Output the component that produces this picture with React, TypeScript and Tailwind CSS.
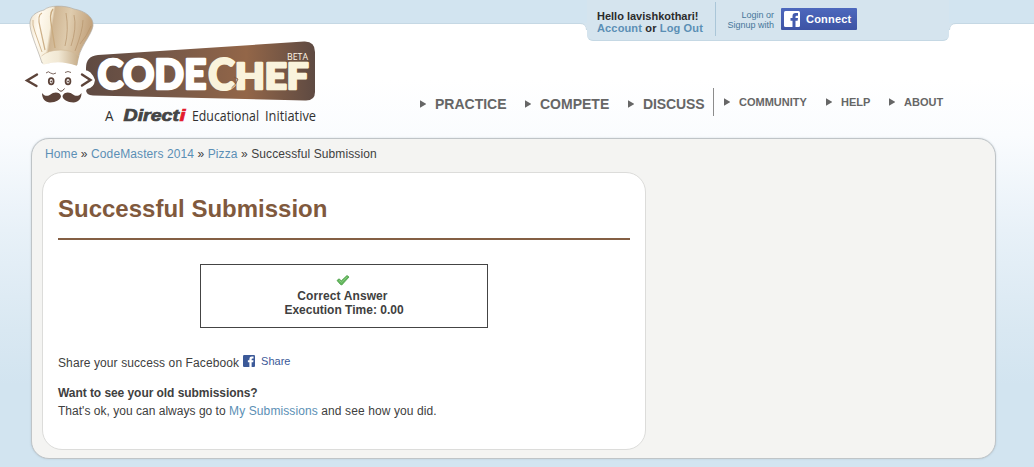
import React from "react";

function Logo() {
  return (
    <svg className="block h-[138px] w-[330px] shrink-0" viewBox="0 0 330 138" role="img" aria-label="CodeChef">
      <defs>
        <linearGradient id="plate" x1="0" x2="1" y1="0" y2="0">
          <stop offset="0" stopColor="#5f4a42" />
          <stop offset="0.4" stopColor="#7a5a48" />
          <stop offset="0.7" stopColor="#936648" />
          <stop offset="1" stopColor="#5e4a42" />
        </linearGradient>
        <linearGradient id="hat" x1="0" x2="1" y1="0" y2="0.15">
          <stop offset="0" stopColor="#eee0c8" />
          <stop offset="0.18" stopColor="#fffaf0" />
          <stop offset="0.36" stopColor="#f7efdc" />
          <stop offset="0.4" stopColor="#cfb592" />
          <stop offset="0.65" stopColor="#dfccae" />
          <stop offset="1" stopColor="#c2a27c" />
        </linearGradient>
        <linearGradient id="band" x1="0" x2="1" y1="0" y2="0">
          <stop offset="0" stopColor="#faf4e4" />
          <stop offset="0.45" stopColor="#f1e8d4" />
          <stop offset="1" stopColor="#c6ac88" />
        </linearGradient>
      </defs>
      <path d="M98 55 L304 41.5 Q315 41 315 52 V92 Q315 101 305 100.5 L93 95.5 Q86 95 86 90 V68 Q86 56 98 55Z" fill="url(#plate)" />
      <path d="M40 64 H78 Q84 66 83 70 Q91 69 95 80 Q94 88 87 89 Q82 101 59 101 Q42 99 39 83Z" fill="#fff" />
      <path d="M42 63 C37 47 29 31 30 22 C31 13 41 11 44 10 C49 5 65 5 74 9 C85 11 94 17 93 26 C91 37 79 46 77 65 Z" fill="url(#hat)" stroke="#b3afa8" strokeWidth="0.7" />
      <path d="M53 9 Q49 14 51.5 26 L55 48" fill="none" stroke="#c8a97e" strokeWidth="1.3" />
      <path d="M42 13 Q37 15 40 27 L45 50" fill="none" stroke="#cdb088" strokeWidth="1.2" />
      <path d="M33 20 Q32 24 35 32 L42 52" fill="none" stroke="#d3ba95" strokeWidth="1" />
      <path d="M66 13 Q69 30 65 46 M74 15 Q77 28 71 46 M83 20 Q83 30 75 51 M91 26 Q87 36 80 44" fill="none" stroke="#b6946c" strokeWidth="0.7" />
      <path d="M41.5 56 Q48 50 61 50 Q72 50 79 56 L76.5 66 Q58 60 43.5 65Z" fill="url(#band)" />
      <path d="M41.5 56 Q48 50 61 50 Q72 50 79 56" fill="none" stroke="#d0b995" strokeWidth="0.6" />
      <path d="M43 65 Q58 59 77 66 Q80 72 79 80 H42 Q40 71 43 65Z" fill="#fff" />
      <path d="M37 74.5 L27 80.5 L36.5 86 M82 74.5 L90.5 80 L82 85.5" fill="none" stroke="#5c4339" strokeWidth="2.4" strokeLinecap="round" />
      <path d="M46 73 Q48.5 70.5 50.5 73 Q53 75 56 73 M65 72.5 Q68 70.5 71 72.5" fill="none" stroke="#5c4339" strokeWidth="0.8" />
      <ellipse cx="51.2" cy="81.3" rx="2.4" ry="3.1" fill="#fff" stroke="#5c4339" strokeWidth="1.8" />
      <ellipse cx="68" cy="81.3" rx="2.4" ry="3.1" fill="#fff" stroke="#5c4339" strokeWidth="1.8" />
      <circle cx="51.3" cy="81.5" r="0.9" fill="#5c4339" />
      <circle cx="68.1" cy="81.5" r="0.9" fill="#5c4339" />
      <path d="M57.5 88.5 Q61 94 64.5 88.5" fill="none" stroke="#5c4339" strokeWidth="1" />
      <path d="M61 96 C60 91.5 53.5 91.500 50.5 94.500 C48 96.500 44.5 96.500 42 93 C42 99 45.5 102.500 50 102.500 C56 102.500 61 99.5 61 96Z M62.500 96 C64 91.500 70 91.500 73 94.500 C75.5 96.500 79 96.500 81.500 93 C81.500 99 78 102.500 73.5 102.500 C67.5 102.500 62.500 99.5 62.500 96Z" fill="#5c4339" />
      <g fontFamily="Lato, sans-serif" fontWeight="900" strokeLinejoin="round">
        <text x="97.5" y="89" fontSize="41" fill="#fff" stroke="#fff" strokeWidth="2.4" textLength="109" lengthAdjust="spacingAndGlyphs">CODE</text>
        <text x="208" y="89.5" fontSize="43" fill="#faf3dc" stroke="#faf3dc" strokeWidth="2" textLength="27" lengthAdjust="spacingAndGlyphs">C</text>
        <text x="235" y="89" fontSize="35.5" fill="#faf3dc" stroke="#faf3dc" strokeWidth="2.6" textLength="73.5" lengthAdjust="spacingAndGlyphs">HEF</text>
      </g>
      <path d="M231.5 88 Q236 85 238 79 L234 77" fill="none" stroke="#80583f" strokeWidth="0.9" />
      <text x="287" y="59.5" fontSize="9.5" fill="#fff6e5" fontFamily="Open Sans, sans-serif" textLength="21" lengthAdjust="spacingAndGlyphs">BETA</text>
      <g fontFamily="Open Sans, sans-serif" fontSize="14" fill="#303030">
        <text x="105" y="121" textLength="8.5" lengthAdjust="spacingAndGlyphs">A</text>
        <text x="192" y="121" textLength="67" lengthAdjust="spacingAndGlyphs">Educational</text>
        <text x="265" y="121" textLength="51" lengthAdjust="spacingAndGlyphs">Initiative</text>
      </g>
      <g fontFamily="Liberation Sans, sans-serif" fontSize="16" fontWeight="700" fontStyle="italic" strokeWidth="0.7">
        <text x="123.5" y="121" fill="#454545" stroke="#454545" textLength="55.5" lengthAdjust="spacingAndGlyphs">Direct</text>
        <text x="179.5" y="121" fill="#e31b2d" stroke="#e31b2d" textLength="6" lengthAdjust="spacingAndGlyphs">i</text>
      </g>
    </svg>
  );
}

function FacebookMark({ className, fill, letter }: { className: string; fill: string; letter: string }) {
  return (
    <svg className={className} viewBox="0 0 16 16" aria-hidden="true">
      <rect width="16" height="16" rx="1.5" fill={fill} />
      <path d="M8.5 16V9.8H6.5V7h2V5.2Q8.5 2 11.7 2H14v2.8h-1.3q-1.2 0-1.2 1.2v1h2.5l-.4 2.8H11.5V16Z" fill={letter} />
    </svg>
  );
}

function AccountTab() {
  return (
    <div className="relative ml-[257px] flex h-[41px] w-[362px] rounded-b-[6px] border-b border-[#c5d8e4] bg-[#d5e4ee]">
      <svg className="absolute -left-[7px] top-[23px] h-[7px] w-[7px]" viewBox="0 0 7 7" aria-hidden="true">
        <path d="M0 0H7V7Q7 .5 0 .5Z" fill="#d5e4ee" />
        <path d="M0 .5Q6.5 .5 6.5 7" fill="none" stroke="#c5d8e4" />
      </svg>
      <svg className="absolute -right-[7px] top-[23px] h-[7px] w-[7px]" viewBox="0 0 7 7" aria-hidden="true">
        <path d="M7 0H0V7Q0 .5 7 .5Z" fill="#d5e4ee" />
        <path d="M7 .5Q.5 .5 .5 7" fill="none" stroke="#c5d8e4" />
      </svg>
      <div className="w-[128px] pl-[10px] pt-[10px] text-[11px] font-bold leading-[12px] text-[#2b2b2b]">
        <div className="whitespace-nowrap">Hello lavishkothari!</div>
        <div className="whitespace-nowrap tracking-[0.15px]">
          <a className="text-[#5b8fb5]">Account</a> or <a className="text-[#5b8fb5]">Log Out</a>
        </div>
      </div>
      <div className="mt-[2px] h-[34px] w-px bg-[#aac6d8]" />
      <div className="w-[58px] whitespace-nowrap pt-[10px] text-right text-[9px] leading-[10px] text-[#47779a]">
        <div>Login or</div>
        <div>Signup with</div>
      </div>
      <a className="ml-[7px] mt-[8px] flex h-[22px] w-[76px] items-center rounded-[1px] bg-linear-to-b from-[#4d68bd] to-[#3d53a4] pl-[3px] text-[11px] font-bold text-white">
        <FacebookMark className="mr-[6px] h-[16px] w-[16px]" fill="#fff" letter="#435bae" />
        <span className="tracking-[0.2px]">Connect</span>
      </a>
    </div>
  );
}

function Arrow() {
  return (
    <svg className="h-[8px] w-[6px] shrink-0" viewBox="0 0 6 8" aria-hidden="true">
      <path d="M0 .2 6 3.7V4.3L0 7.8Z" fill="#666" />
    </svg>
  );
}

function NavItem({ label, className }: { label: string; className: string }) {
  return (
    <a className={`flex shrink-0 items-center whitespace-nowrap ${className}`}>
      <Arrow />
      {label}
    </a>
  );
}

export default function App() {
  return (
    <div className="h-[467px] w-full overflow-hidden bg-[linear-gradient(to_bottom,#fff_0px,#fff_80px,#fafcfe_135px,#e8f1f8_230px,#d9e8f2_330px,#d2e4f0_385px)] font-['Liberation_Sans',Arial,sans-serif] text-[12px] text-[#404040]">
      <header className="flex h-[138px] bg-[linear-gradient(to_bottom,#d2e4f0_0px,#d2e4f0_23px,#c5d8e4_23px,#c5d8e4_24px,transparent_24px)]">
        <Logo />
        <div>
          <AccountTab />
          <nav className="ml-[90px] mt-[47px] flex h-[28px] font-bold text-[#666]">
            <div className="flex h-[28px] items-center border-r border-[#8c8c8c] pt-[4px] text-[14px]">
              <NavItem label="PRACTICE" className="w-[105px] gap-[9px]" />
              <NavItem label="COMPETE" className="w-[103px] gap-[9px]" />
              <NavItem label="DISCUSS" className="w-[85px] gap-[9px] tracking-[-0.1px]" />
            </div>
            <div className="flex h-[28px] items-center pl-[10px] text-[11px]">
              <NavItem label="COMMUNITY" className="w-[102px] gap-[9px]" />
              <NavItem label="HELP" className="w-[63px] gap-[9px]" />
              <NavItem label="ABOUT" className="gap-[9px]" />
            </div>
          </nav>
        </div>
      </header>
      <main className="ml-[31px] h-[321px] w-[965px] rounded-[18px] border border-[#bfc4c7] bg-[#f4f4f2] pl-[10px] shadow-[0_0_2px_rgba(120,140,155,0.35)]">
        <div className="h-[33px] whitespace-nowrap pl-[3px] pt-[7px] leading-[16px] tracking-[0.1px]">
          <a className="text-[#5b8fb5]">Home</a> » <a className="text-[#5b8fb5]">CodeMasters 2014</a> »{" "}
          <a className="text-[#5b8fb5]">Pizza</a> » Successful Submission
        </div>
        <section className="h-[278px] w-[604px] rounded-[20px] border border-[#dcdcda] bg-white px-[15px] pt-[22px]">
          <h1 className="h-[45px] border-b-2 border-[#845f44] text-[24px] font-bold leading-[28px] text-[#80593d]">
            Successful Submission
          </h1>
          <div className="mx-auto mt-[24px] flex h-[64px] w-[288px] flex-col items-center border border-[#444] pt-[8px] font-bold leading-[14px]">
            <svg className="-mt-px mb-px mr-[2px] h-[16px] w-[16px] shrink-0" viewBox="0 0 16 16" aria-hidden="true">
              <path d="m2 8.5 2-1.7 2.3 2L12 3.500l2 1.5L6.8 13 5.5 12.5Z" fill="#62b55c" stroke="#4b9e47" strokeWidth=".8" strokeLinejoin="round" />
              <path d="m4 8.3 2.4 2L12.2 4.8" fill="none" stroke="#87cf80" />
            </svg>
            <div className="mr-[3px] tracking-[0.1px]">Correct Answer</div>
            <div>Execution Time: 0.00</div>
          </div>
          <div className="mt-[27px] flex h-[16px] items-center whitespace-nowrap">
            <span className="tracking-[0.1px]">Share your success on Facebook</span>
            <FacebookMark className="mb-[4px] ml-[4px] mr-[6px] h-[12px] w-[12px]" fill="#3b5998" letter="#fff" />
            <a className="mb-[3px] text-[11px] text-[#3b5998]">Share</a>
          </div>
          <div className="mt-[13px] whitespace-nowrap leading-[18px]">
            <strong className="block tracking-[-0.06px]">Want to see your old submissions?</strong>
            <p className="tracking-[0.1px]">
              <span className="tracking-[0.02px]">That's ok, you can always go to</span> <a className="text-[#5b8fb5]">My Submissions</a> and see how you did.
            </p>
          </div>
        </section>
      </main>
    </div>
  );
}
